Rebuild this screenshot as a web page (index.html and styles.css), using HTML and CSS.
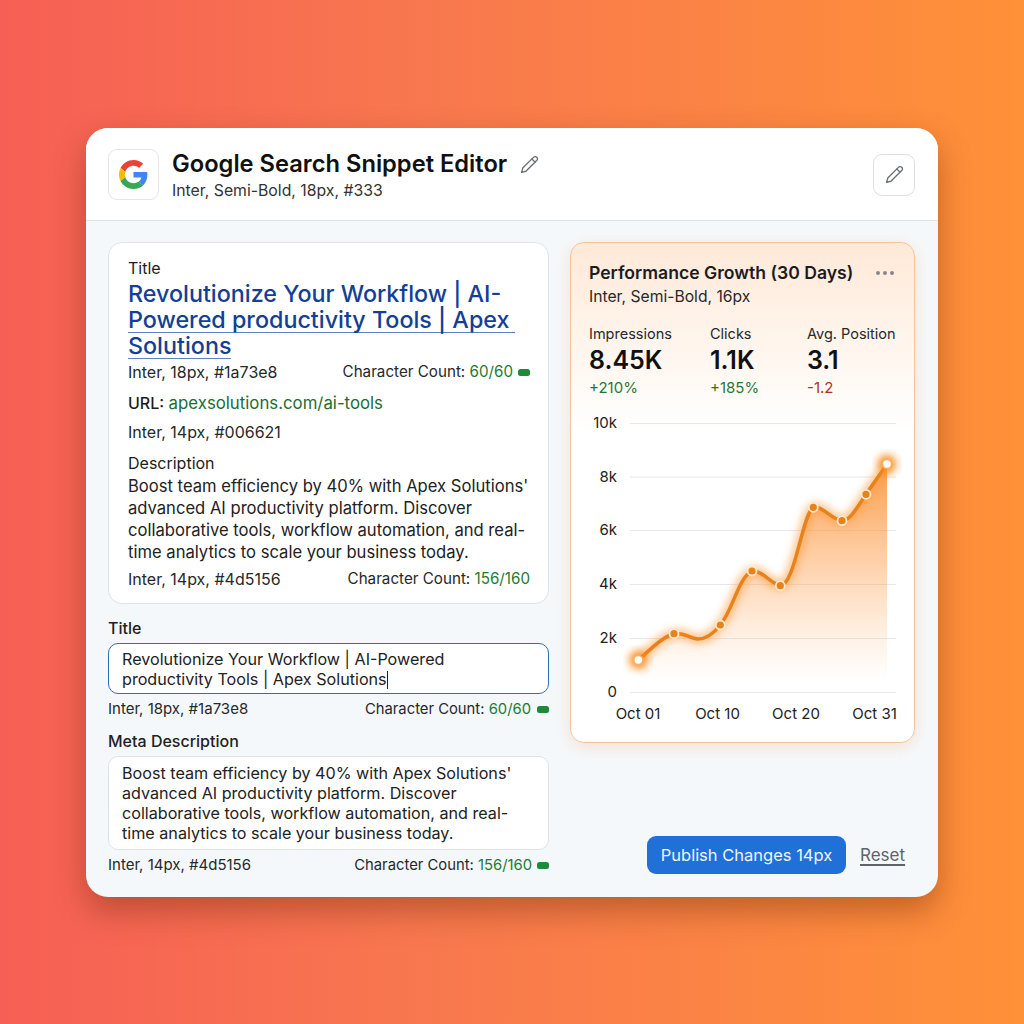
FILE: index.html
```html
<!DOCTYPE html>
<html lang="en">
<head>
    <meta charset="UTF-8">
    <meta name="viewport" content="width=device-width, initial-scale=1.0">
    <title>Google Search Snippet Editor</title>
    <link rel="stylesheet" href="styles.css">
</head>
<body>
    <div class="editor">
        <!-- header -->
        <header class="editor-header">
            <div class="logo-box">
                <svg class="logo" viewBox="0 0 48 48">
                    <path fill="#EA4335" d="M24 9.5c3.54 0 6.71 1.22 9.21 3.6l6.85-6.85C35.9 2.38 30.47 0 24 0 14.62 0 6.51 5.38 2.56 13.22l7.98 6.19C12.43 13.72 17.74 9.5 24 9.5z"/>
                    <path fill="#4285F4" d="M46.98 24.55c0-1.57-.15-3.09-.38-4.55H24v9.02h12.94c-.58 2.96-2.26 5.48-4.78 7.18l7.73 6c4.51-4.18 7.09-10.36 7.09-17.65z"/>
                    <path fill="#FBBC05" d="M10.53 28.59c-.48-1.45-.76-2.99-.76-4.59s.27-3.14.76-4.59l-7.98-6.19C.92 16.46 0 20.12 0 24c0 3.88.92 7.54 2.56 10.78l7.97-6.19z"/>
                    <path fill="#34A853" d="M24 48c6.48 0 11.93-2.13 15.89-5.81l-7.73-6c-2.15 1.45-4.92 2.3-8.16 2.3-6.26 0-11.57-4.22-13.47-9.91l-7.98 6.19C6.51 42.62 14.62 48 24 48z"/>
                </svg>
            </div>
            <div class="header-text">
                <div class="header-title">
                    <h1>Google Search Snippet Editor</h1>
                    <svg class="pencil" viewBox="0 0 24 24"><path d="M17 3a2.85 2.83 0 1 1 4 4L7.5 20.5 2 22l1.5-5.5Z"/><path d="m15 5 4 4"/></svg>
                </div>
                <p class="header-sub">Inter, Semi-Bold, 18px, #333</p>
            </div>
            <button class="edit-btn">
                <svg class="pencil" viewBox="0 0 24 24"><path d="M17 3a2.85 2.83 0 1 1 4 4L7.5 20.5 2 22l1.5-5.5Z"/><path d="m15 5 4 4"/></svg>
            </button>
        </header>

        <div class="editor-body">
            <!-- left column -->
            <div class="left-col">
                <section class="preview">
                    <div class="field-label">Title</div>
                    <h2 class="serp-title">
                        <span class="serp-line">Revolutionize Your Workflow | AI-</span>
                        <span class="serp-line under wide">Powered productivity Tools | Apex</span>
                        <span class="serp-line under">Solutions</span>
                    </h2>
                    <div class="meta-row preview-meta">
                        <span>Inter, 18px, #1a73e8</span>
                        <span class="count">Character Count: <b>60/60</b><i class="pill"></i></span>
                    </div>
                    <div class="serp-url"><strong>URL:</strong> <span>apexsolutions.com/ai-tools</span></div>
                    <div class="meta-row url-meta"><span>Inter, 14px, #006621</span></div>
                    <div class="field-label desc-label">Description</div>
                    <p class="serp-desc">Boost team efficiency by 40% with Apex Solutions' advanced AI productivity platform. Discover collaborative tools, workflow automation, and real-<br>time analytics to scale your business today.</p>
                    <div class="meta-row desc-meta">
                        <span>Inter, 14px, #4d5156</span>
                        <span class="count">Character Count: <b>156/160</b></span>
                    </div>
                </section>

                <section class="form">
                    <label class="form-label">Title</label>
                    <div class="input focused">Revolutionize Your Workflow | AI-Powered<br>productivity Tools | Apex Solutions<i class="caret"></i></div>
                    <div class="meta-row form-meta">
                        <span>Inter, 18px, #1a73e8</span>
                        <span class="count">Character Count: <b>60/60</b><i class="pill gap"></i></span>
                    </div>
                    <label class="form-label second">Meta Description</label>
                    <div class="input">Boost team efficiency by 40% with Apex Solutions'<br>advanced AI productivity platform. Discover<br>collaborative tools, workflow automation, and real-<br>time analytics to scale your business today.</div>
                    <div class="meta-row form-meta">
                        <span>Inter, 14px, #4d5156</span>
                        <span class="count">Character Count: <b>156/160</b><i class="pill"></i></span>
                    </div>
                </section>
            </div>

            <!-- right column -->
            <div class="right-col">
                <section class="perf">
                    <div class="perf-head">
                        <h3>Performance Growth (30 Days)</h3>
                        <div class="dots"><i></i><i></i><i></i></div>
                    </div>
                    <p class="perf-sub">Inter, Semi-Bold, 16px</p>
                    <div class="stats">
                        <div class="stat">
                            <div class="stat-label">Impressions</div>
                            <div class="stat-value">8.45K</div>
                            <div class="stat-delta up">+210%</div>
                        </div>
                        <div class="stat">
                            <div class="stat-label">Clicks</div>
                            <div class="stat-value">1.1K</div>
                            <div class="stat-delta up">+185%</div>
                        </div>
                        <div class="stat">
                            <div class="stat-label">Avg. Position</div>
                            <div class="stat-value">3.1</div>
                            <div class="stat-delta down">-1.2</div>
                        </div>
                    </div>
                    <!-- viewBox uses page coordinates -->
                    <svg class="chart" viewBox="589 410 307 320">
                        <defs>
                            <linearGradient id="area" gradientUnits="userSpaceOnUse" x1="0" y1="464" x2="0" y2="682">
                                <stop offset="0" stop-color="#fb8a26" stop-opacity="0.85"/>
                                <stop offset="0.5" stop-color="#fd9d4a" stop-opacity="0.42"/>
                                <stop offset="1" stop-color="#fdb77a" stop-opacity="0"/>
                            </linearGradient>
                            <filter id="glow" x="-30%" y="-30%" width="160%" height="160%">
                                <feGaussianBlur stdDeviation="4.5"/>
                            </filter>
                        </defs>
                        <g class="grid">
                            <line x1="630" x2="896" y1="423.5" y2="423.5"/>
                            <line x1="630" x2="896" y1="477" y2="477"/>
                            <line x1="630" x2="896" y1="530.5" y2="530.5"/>
                            <line x1="630" x2="896" y1="584.5" y2="584.5"/>
                            <line x1="630" x2="896" y1="638.5" y2="638.5"/>
                            <line x1="630" x2="896" y1="692.5" y2="692.5"/>
                        </g>
                        <g class="y-labels">
                            <text x="617" y="428">10k</text>
                            <text x="617" y="482">8k</text>
                            <text x="617" y="535">6k</text>
                            <text x="617" y="589">4k</text>
                            <text x="617" y="643">2k</text>
                            <text x="617" y="697">0</text>
                        </g>
                        <path class="area" d="M638.3 660C650 650 662 637 674 633.7C685 632 690 639 698 639C707 639 714 633 720.3 625C733 610 738 578 752 571C762 570 770 583 780.3 585.7C795 585 802 515 813.3 507.3C822 505 832 520 842 520.7C850 521 858 506 866 494.3L887 464V692H638.3Z"/>
                        <path class="line-glow" d="M638.3 660C650 650 662 637 674 633.7C685 632 690 639 698 639C707 639 714 633 720.3 625C733 610 738 578 752 571C762 570 770 583 780.3 585.7C795 585 802 515 813.3 507.3C822 505 832 520 842 520.7C850 521 858 506 866 494.3L887 464"/>
                        <path class="line" d="M638.3 660C650 650 662 637 674 633.7C685 632 690 639 698 639C707 639 714 633 720.3 625C733 610 738 578 752 571C762 570 770 583 780.3 585.7C795 585 802 515 813.3 507.3C822 505 832 520 842 520.7C850 521 858 506 866 494.3L887 464"/>
                        <circle class="end-glow" cx="638.3" cy="660" r="9"/>
                        <circle class="end-glow" cx="887" cy="464" r="9"/>
                        <circle class="pt" cx="674" cy="633.7" r="4.5"/>
                        <circle class="pt" cx="720.3" cy="625" r="4.5"/>
                        <circle class="pt" cx="752" cy="571" r="4.5"/>
                        <circle class="pt" cx="780.3" cy="585.7" r="4.5"/>
                        <circle class="pt" cx="813.3" cy="507.3" r="4.5"/>
                        <circle class="pt" cx="842" cy="520.7" r="4.5"/>
                        <circle class="pt" cx="866" cy="494.3" r="4.5"/>
                        <circle class="pt-end" cx="638.3" cy="660" r="4.5"/>
                        <circle class="pt-end" cx="887" cy="464" r="4.5"/>
                        <g class="x-labels">
                            <text x="638" y="719">Oct 01</text>
                            <text x="717.5" y="719">Oct 10</text>
                            <text x="796" y="719">Oct 20</text>
                            <text x="874.5" y="719">Oct 31</text>
                        </g>
                    </svg>
                </section>
                <div class="actions">
                    <button class="publish">Publish Changes 14px</button>
                    <a class="reset" href="#">Reset</a>
                </div>
            </div>
        </div>
    </div>
</body>
</html>
```

FILE: styles.css
```css
* {
    margin: 0;
    padding: 0;
    box-sizing: border-box;
}

body {
    font-family: Inter, "Liberation Sans", sans-serif;
    width: 1024px;
    height: 1024px;
    overflow: hidden;
    background: linear-gradient(90deg, #f65f55 0%, #f8774f 40%, #fb8444 70%, #ff9138 100%);
    display: flex;
    align-items: center;
    justify-content: center;
    color: #1c1c1e;
}

.editor {
    width: 852px;
    height: 769px;
    border-radius: 22px;
    background: #f5f8fa;
    box-shadow: 0 14px 32px rgba(110, 40, 10, 0.42);
    overflow: hidden;
    display: flex;
    flex-direction: column;
}

/* header */
.editor-header {
    display: flex;
    align-items: center;
    gap: 13px;
    height: 93px;
    flex-shrink: 0;
    padding: 2px 23px 0 22px;
    background: #fff;
    border-bottom: 1px solid #dfe3e6;
}

.logo-box {
    width: 51px;
    height: 51px;
    border: 1px solid #e3e5e8;
    border-radius: 9px;
    background: #fff;
    display: flex;
    align-items: center;
    justify-content: center;
}

.logo {
    width: 29px;
    height: 29px;
}

.header-text {
    flex: 1;
    padding-top: 2px;
}

.header-title {
    display: flex;
    align-items: center;
    gap: 13px;
}

.header-title h1 {
    font-size: 23.7px;
    font-weight: 600;
    line-height: 30px;
    color: #111;
}

.header-sub {
    font-size: 15.8px;
    line-height: 22px;
    margin-top: 1px;
    color: #333;
}

.pencil {
    width: 19px;
    height: 19px;
    fill: none;
    stroke: #6b7075;
    stroke-width: 1.7;
    stroke-linecap: round;
    stroke-linejoin: round;
}

.edit-btn {
    width: 42px;
    height: 42px;
    border: 1px solid #dcdfe3;
    border-radius: 9px;
    background: #fff;
    display: flex;
    align-items: center;
    justify-content: center;
}

/* body */
.editor-body {
    flex: 1;
    display: flex;
    gap: 21px;
    padding: 21px 23px 22px 22px;
}

.left-col {
    width: 441px;
    display: flex;
    flex-direction: column;
}

.right-col {
    flex: 1;
    display: flex;
    flex-direction: column;
    padding-bottom: 1px;
}

/* serp preview */
.preview {
    height: 362px;
    padding: 14px 18px 0 19px;
    background: #fff;
    border: 1px solid #dfe3e6;
    border-radius: 14px;
}

.field-label {
    font-size: 16px;
    line-height: 22px;
    color: #1c1c1e;
}

.serp-title {
    font-size: 23.3px;
    font-weight: 500;
    line-height: 26px;
    color: #143f96;
    margin-top: 2px;
}

.serp-line {
    display: block;
    width: fit-content;
}

.serp-line.under {
    border-bottom: 1px solid #5f80c4;
    line-height: 25px;
}

.serp-line.wide {
    padding-right: 6px;
}

.meta-row {
    display: flex;
    justify-content: space-between;
    align-items: center;
    font-size: 15px;
    line-height: 20px;
    color: #26282b;
}

.count {
    font-size: 14.8px;
}

.count b {
    font-weight: 400;
    color: #1d7a32;
}

.pill {
    display: inline-block;
    width: 12px;
    height: 7px;
    border-radius: 2.5px;
    background: #1d8a38;
    margin-left: 5px;
    vertical-align: 1px;
}

.pill.gap {
    margin-left: 6px;
}

.preview .meta-row {
    font-size: 16px;
}

.preview .count {
    font-size: 15.2px;
}

.preview-meta {
    margin-top: 3px;
}

.serp-url {
    font-size: 16px;
    line-height: 22px;
    margin-top: 10px;
    color: #1c1c1e;
}

.serp-url strong {
    font-weight: 500;
}

.serp-url span {
    font-size: 16.8px;
    color: #1a6e30;
}

.url-meta {
    margin-top: 8px;
}

.desc-label {
    margin-top: 10px;
}

.serp-desc {
    margin-top: 1px;
    font-size: 16.6px;
    line-height: 22.3px;
    color: #222;
}

.desc-meta {
    margin-top: 5px;
}

/* form */
.form {
    margin-top: 13px;
}

.form-label {
    display: block;
    font-size: 16px;
    font-weight: 500;
    line-height: 22px;
    color: #222;
}

.form-label.second {
    margin-top: 11px;
}

.input {
    margin-top: 4px;
    padding: 6px 12px 6px 13px;
    font-size: 16.15px;
    line-height: 20px;
    color: #222;
    background: #fff;
    border: 1px solid #dfe3e6;
    border-radius: 10px;
}

.input.focused {
    padding: 5px 12px 4px 13px;
    border: 1.5px solid #2f6fb8;
}

.caret {
    display: inline-block;
    width: 1px;
    height: 18px;
    background: #222;
    vertical-align: -4px;
}

.form-meta {
    margin-top: 5px;
}

/* performance card */
.perf {
    height: 501px;
    padding: 18px 18px 0;
    border: 1px solid #f3c49a;
    border-radius: 14px;
    background: linear-gradient(180deg, #ffe9d8 0%, #fff4ea 18%, #fff 38%);
    box-shadow: 0 4px 16px rgba(240, 150, 80, 0.22);
}

.perf-head {
    display: flex;
    align-items: center;
    justify-content: space-between;
    padding-right: 2px;
}

.perf-head h3 {
    font-size: 17.6px;
    font-weight: 600;
    line-height: 24px;
    color: #1c1c1e;
}

.dots {
    display: flex;
    gap: 3px;
}

.dots i {
    width: 4px;
    height: 4px;
    border-radius: 50%;
    background: #85898e;
}

.perf-sub {
    font-size: 15.7px;
    line-height: 20px;
    margin-top: 2px;
    color: #26282b;
}

.stats {
    display: grid;
    grid-template-columns: 121px 97px 1fr;
    margin-top: 17px;
}

.stat-label {
    font-size: 14.5px;
    line-height: 20px;
    color: #26282b;
}

.stat-value {
    font-size: 25px;
    font-weight: 600;
    line-height: 32px;
    color: #111;
}

.stat-delta {
    font-size: 15px;
    line-height: 20px;
    margin-top: 2px;
}

.up { color: #1d7a32; }
.down { color: #b3302a; }

.chart {
    display: block;
    width: 307px;
    height: 320px;
    margin-top: 12px;
    overflow: visible;
}

.grid line {
    stroke: #e6e8ea;
    stroke-width: 1;
}

.y-labels text {
    font-size: 15px;
    text-anchor: end;
    fill: #222;
}

.x-labels text {
    font-size: 15px;
    text-anchor: middle;
    fill: #222;
}

.area {
    fill: url(#area);
}

.line {
    fill: none;
    stroke: #e8821c;
    stroke-width: 3.5;
    stroke-linecap: round;
}

.line-glow {
    fill: none;
    stroke: #fb9a3d;
    stroke-width: 8;
    opacity: 0.7;
    filter: url(#glow);
}

.end-glow {
    fill: #f98a1f;
    filter: url(#glow);
}

.pt {
    fill: #e9821a;
    stroke: #fdeacf;
    stroke-width: 1.8;
}

.pt-end {
    fill: #fff;
    stroke: #fbb25f;
    stroke-width: 1.5;
}

/* actions */
.actions {
    margin-top: auto;
    display: flex;
    align-items: center;
    gap: 14px;
    padding-left: 77px;
}

.publish {
    width: 199px;
    height: 38px;
    border: none;
    border-radius: 9px;
    background: #2070d8;
    color: #eef5fd;
    font-family: Inter, "Liberation Sans", sans-serif;
    font-size: 16.5px;
}

.reset {
    font-size: 17px;
    color: #5e6368;
    text-decoration: underline;
    text-decoration-thickness: 1.5px;
    text-underline-offset: 3px;
}
```
